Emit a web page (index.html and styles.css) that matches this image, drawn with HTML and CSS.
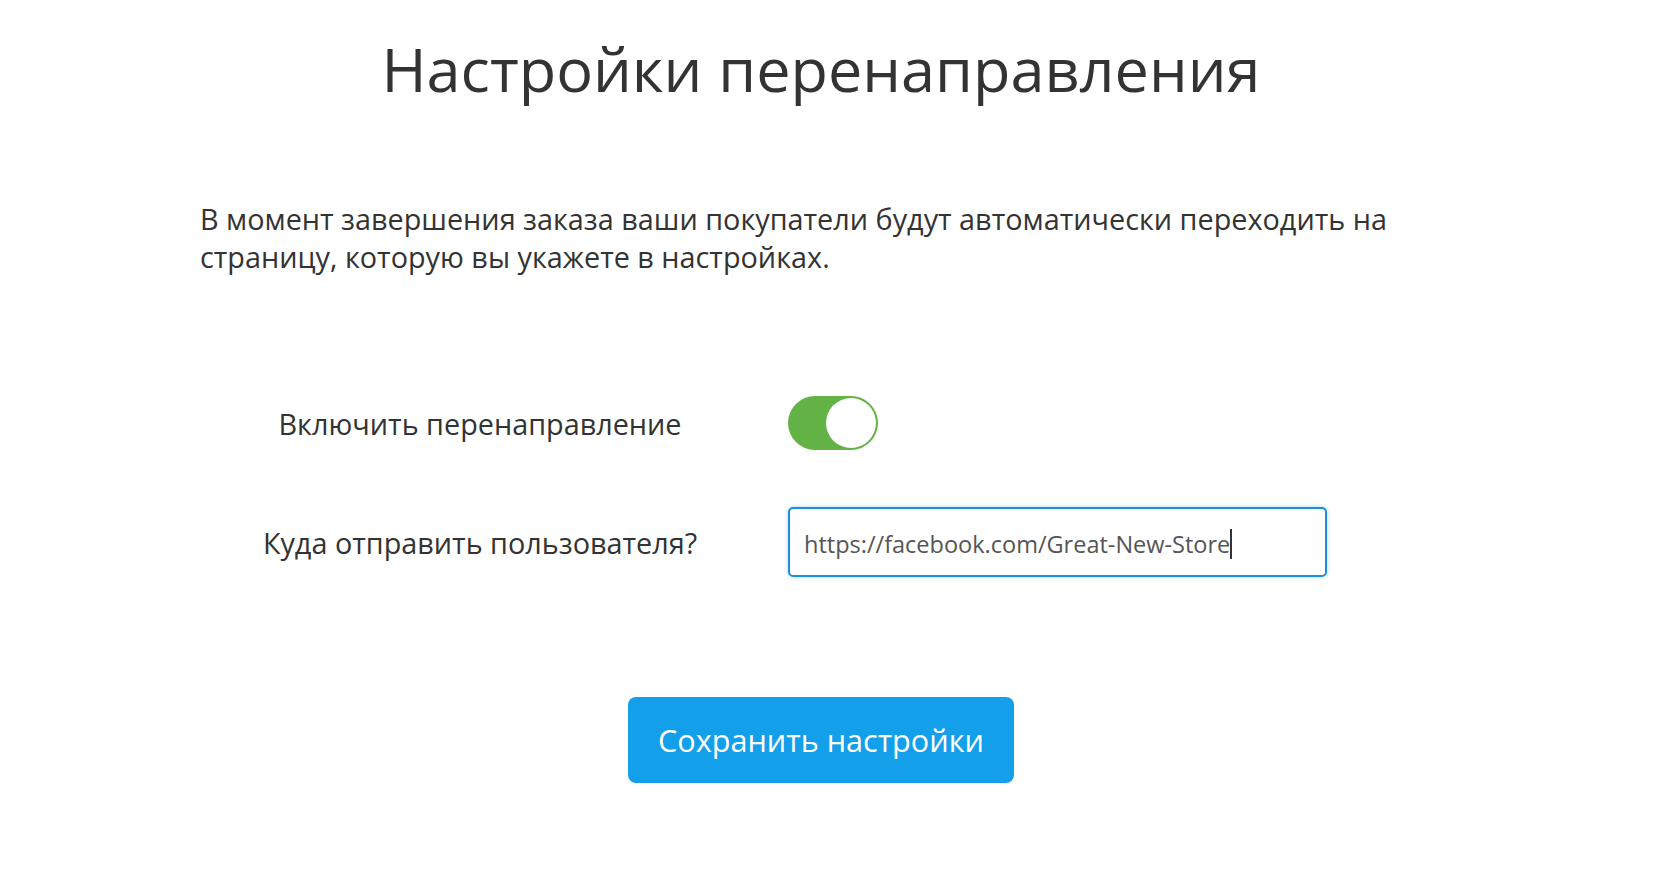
FILE: index.html
```html
<!DOCTYPE html>
<html lang="ru">
<head>
    <meta charset="UTF-8">
    <title>Настройки перенаправления</title>
    <link rel="stylesheet" href="styles.css">
</head>
<body>
<div class="page">
    <h1 class="title">Настройки перенаправления</h1>
    <p class="intro">В момент завершения заказа ваши покупатели будут автоматически переходить на страницу, которую вы укажете в настройках.</p>
    <div class="form">
        <div class="row row_toggle">
            <span class="label">Включить перенаправление</span>
            <div class="toggle"><span class="knob"></span></div>
        </div>
        <div class="row">
            <span class="label">Куда отправить пользователя?</span>
            <div class="field">https://facebook.com/Great-New-Store<span class="caret"></span></div>
        </div>
    </div>
    <div class="actions">
        <button class="save">Сохранить настройки</button>
    </div>
</div>
</body>
</html>
```

FILE: styles.css
```css
body {
    margin: 0;
    font-family: "Open Sans", "Noto Sans", sans-serif;
    color: #333333;
    background: #ffffff;
}

.page {
    width: 1242px;
    margin-left: 200px;
    padding-top: 32px;
}

.title {
    margin: 0;
    font-size: 61.2px;
    font-weight: normal;
    line-height: 74px;
    text-align: center;
    color: #333333;
}

.intro {
    margin: 94px 0 0;
    font-size: 28.8px;
    line-height: 38px;
    width: 1220px;
}

.form {
    margin-top: 120px;
    display: grid;
    row-gap: 57px;
}

.row {
    display: grid;
    grid-template-columns: 560px 539px;
    column-gap: 28px;
    align-items: center;
}

.label {
    font-size: 28.8px;
    text-align: center;
}

.toggle {
    width: 90px;
    height: 54px;
    border-radius: 27px;
    background-color: #63b246;
    display: flex;
    justify-content: flex-end;
    align-items: center;
    padding: 0 2px;
    box-sizing: border-box;
}

.knob {
    width: 50px;
    height: 50px;
    border-radius: 50%;
    background-color: #ffffff;
}

.field {
    height: 70px;
    box-sizing: border-box;
    border: 2px solid #1b8fe0;
    border-radius: 5px;
    box-shadow: 0 0 4px rgba(27, 143, 224, 0.35);
    padding: 3px 14px 0;
    display: flex;
    align-items: center;
    font-size: 23.5px;
    color: #555555;
}

.caret {
    display: inline-block;
    width: 2px;
    height: 30px;
    background-color: #333333;
}

.actions {
    margin-top: 120px;
    display: flex;
    justify-content: center;
}

.save {
    height: 86px;
    padding: 0 30px;
    border: none;
    border-radius: 8px;
    background-color: #139fea;
    color: #ffffff;
    font-family: "Open Sans", "Noto Sans", sans-serif;
    font-size: 30.6px;
}
```
